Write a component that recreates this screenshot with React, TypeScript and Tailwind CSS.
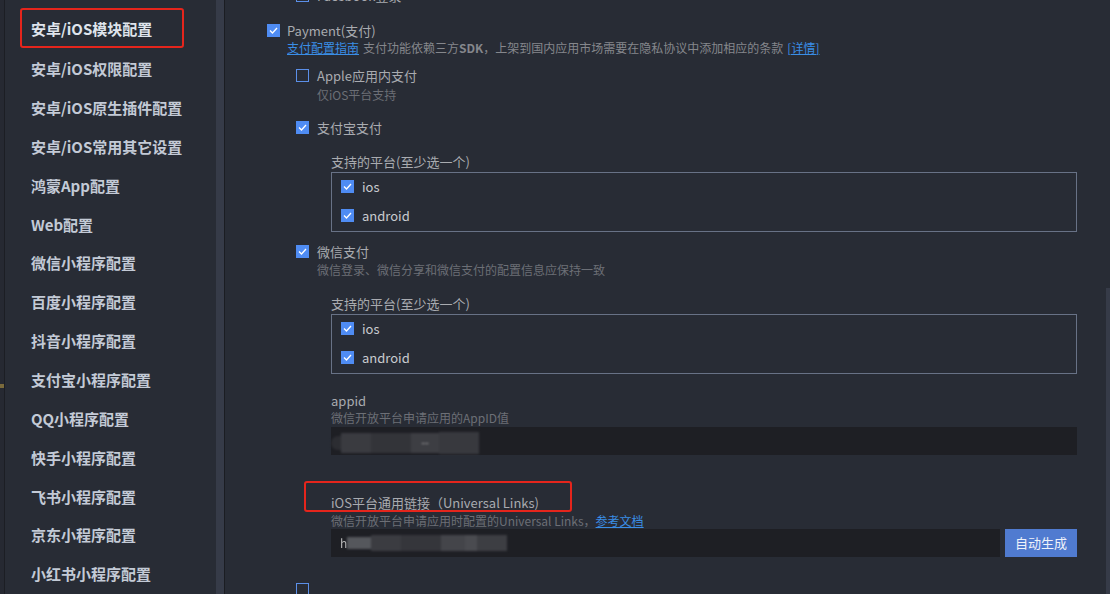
import React from "react";

const font = "font-['Microsoft_YaHei','Noto_Sans_CJK_SC',sans-serif]";

const navItems = [
  "安卓/iOS模块配置",
  "安卓/iOS权限配置",
  "安卓/iOS原生插件配置",
  "安卓/iOS常用其它设置",
  "鸿蒙App配置",
  "Web配置",
  "微信小程序配置",
  "百度小程序配置",
  "抖音小程序配置",
  "支付宝小程序配置",
  "QQ小程序配置",
  "快手小程序配置",
  "飞书小程序配置",
  "京东小程序配置",
  "小红书小程序配置",
];

const Check = ({ on = true }: { on?: boolean }) =>
  on ? (
    <span className="w-[13px] h-[13px] shrink-0 bg-[#4f8cf3] flex items-center justify-center">
      <svg width="9" height="7" viewBox="0 0 9 7" fill="none">
        <path d="M1 3.5 L3.5 6 L8 1" stroke="#fff" strokeWidth="1.3" />
      </svg>
    </span>
  ) : (
    <span className="w-[13px] h-[13px] shrink-0 border border-[#5b8fe8] box-border" />
  );

const Platforms = () => (
  <div className="h-[60px] w-[746px] border border-[#687286] flex flex-col pl-[9px] pt-[7px] gap-[15px]">
    {["ios", "android"].map((p) => (
      <div key={p} className="h-[14px] flex items-center gap-[8px]">
        <Check />
        <span className="text-[13px] text-[#c9cbd0]">{p}</span>
      </div>
    ))}
  </div>
);

export default function App() {
  return (
    <div className={`w-[1110px] h-[594px] overflow-hidden flex bg-[#282c35] ${font}`}>
      {/* sidebar */}
      <div className="w-[216px] h-full flex">
        <div className="w-[4px] h-full bg-[#262932] relative">
          <span className="absolute left-0 top-[384px] w-[4px] h-[4px] bg-[#7a6a3c]" />
        </div>
        <div className="w-[1px] h-full bg-[#1c1e24]" />
        <div className="flex-1 flex flex-col pt-[8px] pl-[15px]">
          {navItems.map((n, i) => (
            <div
              key={n}
              className={
                "flex items-center text-[15px] font-bold " +
                (i === 0
                  ? "w-[164px] h-[40px] pl-[9px] pt-[3px] mb-[2px] border-2 border-[#e5251c] rounded-[3px] text-[#dfe4ec]"
                  : "h-[39px] pl-[11px] text-[#c3cad6]")
              }
            >
              {n}
            </div>
          ))}
        </div>
      </div>
      <div className="w-[8px] h-full bg-[#363b48]" />
      <div className="w-[1px] h-full bg-[#1b1d22]" />

      {/* content */}
      <div className="flex-1 h-full flex">
        <div className="flex-1 flex flex-col pl-[42px] -mt-[14px]">
          {/* Facebook row, cut off */}
          <div className="h-[20px] pl-[29px] flex items-center gap-[8px]">
            <Check on={false} />
            <span className="text-[13px] text-[#a9abb0]">Facebook登录</span>
          </div>

          {/* Payment */}
          <div className="mt-[16px] h-[18px] flex items-center gap-[7px]">
            <Check />
            <span className="text-[13px] text-[#a9abb0]">Payment(支付)</span>
          </div>
          <div className="h-[16px] pl-[20px] flex items-center text-[12px] text-[#85878c] whitespace-nowrap">
            <span className="text-[#3a8ee6] underline">支付配置指南</span>
            <span className="ml-[4px]">支付功能依赖三方<b className="font-semibold">SDK</b>，上架到国内应用市场需要在隐私协议中添加相应的条款</span>
            <span className="ml-[4px] text-[#3a8ee6] underline">[详情]</span>
          </div>

          <div className="pl-[29px] flex flex-col">
            {/* Apple */}
            <div className="mt-[11px] h-[18px] flex items-center gap-[8px]">
              <Check on={false} />
              <span className="text-[13px] text-[#a9abb0]">Apple应用内支付</span>
            </div>
            <div className="mt-[2px] h-[16px] pl-[21px] flex items-center text-[12px] text-[#6c6f76]">仅iOS平台支持</div>

            {/* Alipay */}
            <div className="mt-[16px] h-[18px] flex items-center gap-[8px]">
              <Check />
              <span className="text-[13px] text-[#a9abb0]">支付宝支付</span>
            </div>
            <div className="pl-[35px] flex flex-col">
              <div className="mt-[17px] h-[16px] flex items-center text-[13px] text-[#a9abb0]">支持的平台(至少选一个)</div>
              <div className="mt-[2px]">
                <Platforms />
              </div>
            </div>

            {/* WeChat */}
            <div className="mt-[11px] h-[18px] flex items-center gap-[8px]">
              <Check />
              <span className="text-[13px] text-[#a9abb0]">微信支付</span>
            </div>
            <div className="mt-[1px] h-[16px] pl-[21px] flex items-center text-[12px] text-[#6c6f76]">微信登录、微信分享和微信支付的配置信息应保持一致</div>
            <div className="pl-[35px] flex flex-col">
              <div className="mt-[18px] h-[16px] flex items-center text-[13px] text-[#a9abb0]">支持的平台(至少选一个)</div>
              <div className="mt-[2px]">
                <Platforms />
              </div>

              <div className="mt-[18px] h-[18px] flex items-center text-[13px] text-[#a9abb0]">appid</div>
              <div className="h-[16px] flex items-center text-[12px] text-[#6c6f76]">微信开放平台申请应用的AppID值</div>
              <div className="mt-[1px] h-[28px] w-[746px] bg-[#1e1f24] flex items-center">
                <div className="flex items-center h-[24px] blur-[1px] mt-[4px]">
                  <span className="w-[10px] h-[14px] bg-[#2c2d32] rounded-l-full" />
                  <span className="w-[30px] h-[20px] bg-[#3a3b40]" />
                  <span className="w-[40px] h-[20px] bg-[#333439]" />
                  <span className="w-[28px] h-[20px] bg-[#3d3e43] flex items-center justify-center text-[11px] text-[#b0b0b0]">--</span>
                  <span className="w-[40px] h-[22px] bg-[#38393e]" />
                </div>
              </div>
            </div>

            {/* Universal links */}
            <div className="pl-[35px] flex flex-col">
              <div className="relative mt-[39px] h-[18px] flex items-center text-[13px] text-[#a9abb0] whitespace-nowrap">
                iOS平台通用链接（Universal Links)
                <span className="absolute -left-[27px] -top-[13px] w-[268px] h-[31px] border-2 border-[#e5251c] rounded-[3px]" />
              </div>
              <div className="mt-[1px] h-[16px] flex items-center text-[12px] text-[#6c6f76] whitespace-nowrap">
                微信开放平台申请应用时配置的Universal Links，
                <span className="text-[#3a8ee6] underline">参考文档</span>
              </div>
              <div className="h-[28px] flex gap-[5px]">
                <div className="w-[669px] h-full bg-[#1e1f24] flex items-center pl-[9px]">
                  <span className="text-[12px] text-[#b8b8b8] blur-[0.4px]">h</span>
                  <div className="flex items-center h-[18px] blur-[1px]">
                    <span className="w-[24px] h-[12px] bg-[#55575c]" />
                    <span className="w-[30px] h-[16px] bg-[#3b3c41]" />
                    <span className="w-[40px] h-[16px] bg-[#35363b]" />
                    <span className="w-[24px] h-[16px] bg-[#44454a]" />
                    <span className="w-[12px] h-[16px] bg-[#4a4b50]" />
                    <span className="w-[30px] h-[16px] bg-[#3d3e43]" />
                  </div>
                </div>
                <button className="w-[72px] h-full bg-[#507bd0] text-[13px] text-[#eef2fa]">自动生成</button>
              </div>
            </div>

            <div className="mt-[24px] h-[18px] flex items-center gap-[8px]">
              <Check on={false} />
            </div>
          </div>
        </div>
        <div className="w-[4px] h-full flex flex-col">
          <div className="h-[288px]" />
          <div className="flex-1 bg-[#363b48]" />
        </div>
      </div>
    </div>
  );
}
